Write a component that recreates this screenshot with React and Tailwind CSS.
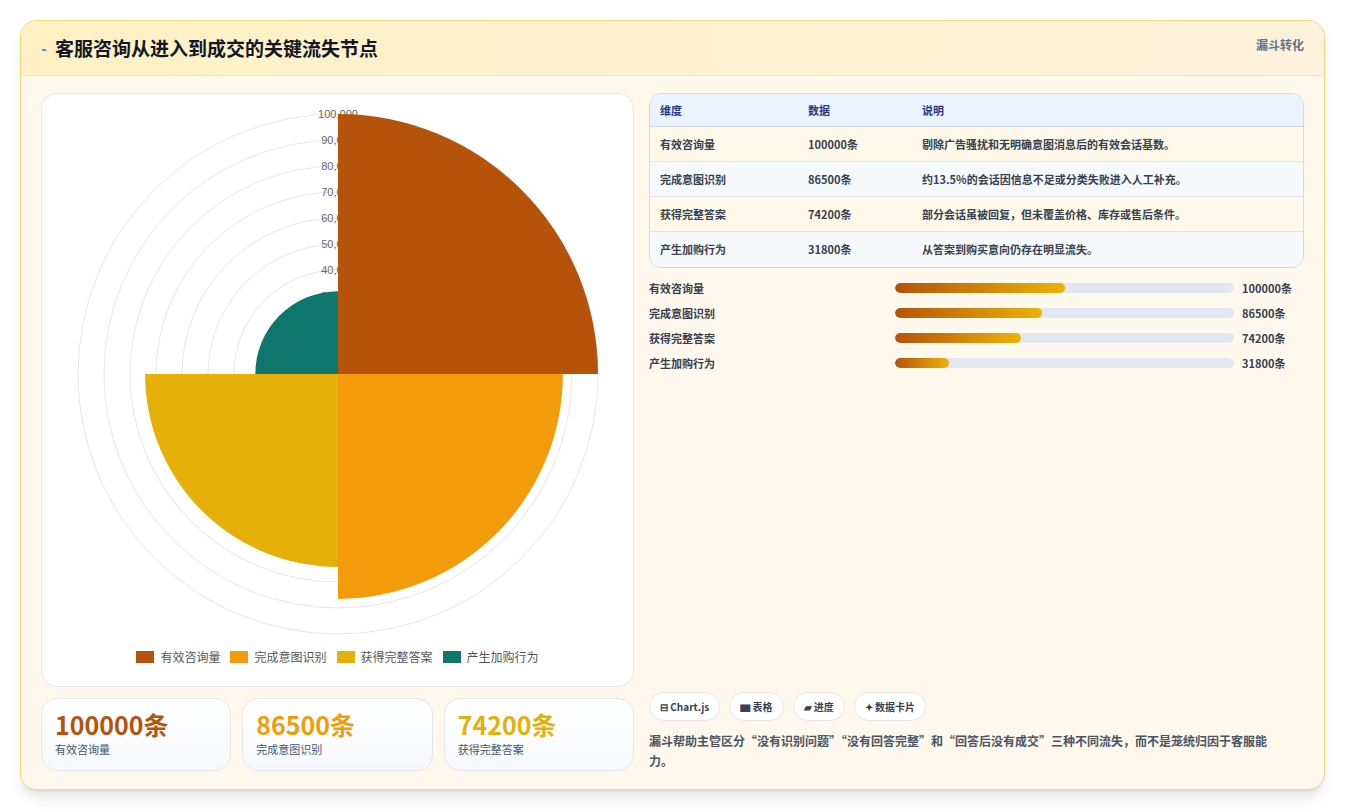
const font = { fontFamily: '"Noto Sans CJK SC", "Noto Sans", sans-serif' };
const C = [296, 280];
const R = 260;
const data = [
  { n: '有效咨询量', v: 100000, c: '#b45309', d: '剔除广告骚扰和无明确意图消息后的有效会话基数。' },
  { n: '完成意图识别', v: 86500, c: '#f39c0b', d: '约13.5%的会话因信息不足或分类失败进入人工补充。' },
  { n: '获得完整答案', v: 74200, c: '#e6b00a', d: '部分会话虽被回复，但未覆盖价格、库存或售后条件。' },
  { n: '产生加购行为', v: 31800, c: '#0f766e', d: '从答案到购买意向仍存在明显流失。' },
];
function arc(r, a0, a1) {
  const p = (a) => [C[0] + r * Math.cos(a), C[1] + r * Math.sin(a)];
  const [x0, y0] = p(a0), [x1, y1] = p(a1);
  return `M${C[0]},${C[1]} L${x0},${y0} A${r},${r} 0 0 1 ${x1},${y1} Z`;
}
function Chart() {
  const rings = [1,2,3,4,5,6,7,8,9,10];
  return (
    <svg width="593" height="555" className="block">
      {rings.map(i => <circle key={i} cx={C[0]} cy={C[1]} r={i*26} fill="none" stroke="#e5e7eb" strokeWidth="1" />)}
      {rings.map(i => <text key={'t'+i} x={C[0]} y={C[1]-i*26+4} textAnchor="middle" fontSize="11" fill="#666" fontFamily="Liberation Sans, sans-serif">{(i*10000).toLocaleString('en-US')}</text>)}
      {data.map((d, i) => {
        const a0 = -Math.PI/2 + i*Math.PI/2;
        return <path key={i} d={arc(d.v/100000*R, a0, a0+Math.PI/2)} fill={d.c} />;
      })}
    </svg>
  );
}
export default function App() {
  return (
    <div className="w-[1345px] h-[810px] bg-white p-5" style={font}>
      <div className="h-[770px] rounded-2xl border border-[#f5d77a] bg-[#fff8ec] shadow-lg overflow-hidden flex flex-col">
        <div className="h-[55px] flex items-start justify-between px-5 bg-gradient-to-r from-[#fff1c4] to-[#fff1dc] border-b border-[#f3e5c0]">
          <div className="flex items-center gap-2 mt-[13px]">
            <span className="text-[10px] text-blue-600">⌁</span>
            <span className="text-[19px] font-bold text-[#111827]">客服咨询从进入到成交的关键流失节点</span>
          </div>
          <span className="text-[12px] font-bold text-slate-500 mt-[15px]">漏斗转化</span>
        </div>
        <div className="flex gap-[15px] px-5 pt-[17px]">
          <div className="w-[593px] flex flex-col gap-[11px]">
            <div className="h-[594px] rounded-2xl border border-[#e5e7eb] bg-white">
              <Chart />
              <div className="flex justify-center gap-[10px] text-[12px] text-[#555] -mt-[1px]">
                {data.map(d => <div key={d.n} className="flex items-center gap-[6px]"><span className="w-[18px] h-[12px]" style={{background: d.c}}></span>{d.n}</div>)}
              </div>
            </div>
            <div className="grid grid-cols-3 gap-[11px]">
              {data.slice(0,3).map(d => (
                <div key={d.n} className="h-[73px] rounded-2xl border border-[#e5e7eb] bg-gradient-to-b from-white to-[#f6f9fc] px-[13px] pt-[8px]">
                  <div className="text-[25px] font-bold leading-[34px]" style={{color: d.c}}>{d.v}条</div>
                  <div className="text-[11px] text-slate-600">{d.n}</div>
                </div>
              ))}
            </div>
          </div>
          <div className="flex-1 flex flex-col">
            <div className="rounded-xl border border-[#cfd8e3] overflow-hidden text-[11px] font-bold text-[#374151]">
              <div className="flex h-[33px] items-center bg-[#eaf3fe] text-[#1e3a8a] border-b border-[#cfd8e3]">
                <div className="w-[158px] pl-[10px]">维度</div><div className="w-[114px]">数据</div><div>说明</div>
              </div>
              {data.map((d, i) => (
                <div key={d.n} className={`flex h-[35px] items-center ${i%2===0?'bg-[#fef9e8]':'bg-[#f6f9fb]'} ${i<3?'border-b border-[#dfe5ec]':''}`}>
                  <div className="w-[158px] pl-[10px]">{d.n}</div><div className="w-[114px]">{d.v}条</div><div>{d.d}</div>
                </div>
              ))}
            </div>
            <div className="flex flex-col gap-[13px] mt-[14px] text-[11px] font-bold text-[#374151]">
              {data.map(d => (
                <div key={d.n} className="flex items-center h-[12px]">
                  <div className="w-[246px]">{d.n}</div>
                  <div className="w-[339px] h-[10px] rounded-full bg-[#e2e8f0] overflow-hidden">
                    <div className="h-full rounded-full bg-gradient-to-r from-[#b45309] to-[#eab308]" style={{width: (d.v/200000*100)+'%'}}></div>
                  </div>
                  <div className="ml-[8px]">{d.v}条</div>
                </div>
              ))}
            </div>
            <div className="flex-1"></div>
            <div className="flex gap-[9px] text-[10px] font-bold text-[#374151] mt-[318px]">
              {['⊟ Chart.js','▆ 表格','▰ 进度','✦ 数据卡片'].map(t => <span key={t} className="h-[29px] px-[10px] flex items-center rounded-full border border-[#e5e7eb] bg-white">{t}</span>)}
            </div>
            <p className="mt-[10px] text-[12px] font-bold text-[#4b5563] leading-[20px] pr-[14px]">漏斗帮助主管区分“没有识别问题”“没有回答完整”和“回答后没有成交”三种不同流失，而不是笼统归因于客服能力。</p>
          </div>
        </div>
      </div>
    </div>
  );
}
